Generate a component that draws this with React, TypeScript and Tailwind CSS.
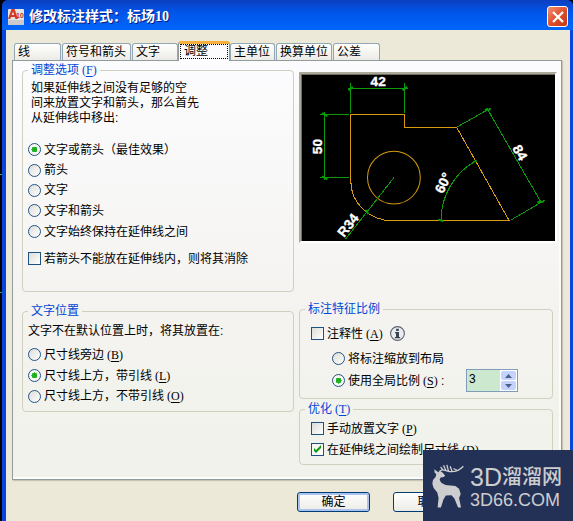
import { ReactNode, useState } from "react";

const TABS = [
  { label: "线", width: "w-[47px]" },
  { label: "符号和箭头", width: "w-[69px]" },
  { label: "文字", width: "w-[46px]" },
  { label: "调整", width: "w-[52px]" },
  { label: "主单位", width: "w-[45px]" },
  { label: "换算单位", width: "w-[56px]" },
  { label: "公差", width: "w-[47px]" },
];

// Mnemonic such as (F), set in the Latin serif face
function Key({ children }: { children: string }) {
  return (
    <span className="pl-[3px] font-['Liberation_Serif',serif]">
      (<u className="underline-offset-2">{children}</u>)
    </span>
  );
}

interface GroupProps {
  title: ReactNode;
  className: string;
  children: ReactNode;
}

function Group({ title, className, children }: GroupProps) {
  return (
    <fieldset className="min-w-0 rounded-[4px] border border-[#d0d0bf]">
      <legend className="ml-[5px] h-[14px] px-[3px] leading-[14px] text-[#0046d5]">
        {title}
      </legend>
      <div className={className}>{children}</div>
    </fieldset>
  );
}

interface OptionProps {
  name: string;
  value: string;
  selected: string;
  onSelect: (value: string) => void;
  height?: string;
  children: ReactNode;
}

function RadioOption({ name, value, selected, onSelect, height = "h-[21px]", children }: OptionProps) {
  return (
    <label className={`flex items-center gap-[3px] whitespace-nowrap ${height}`}>
      <input
        type="radio"
        name={name}
        checked={selected === value}
        onChange={() => onSelect(value)}
        className="h-[13px] w-[13px] shrink-0 appearance-none rounded-full border border-[#21548a] bg-linear-to-br from-[#dcdcd7] to-white checked:bg-[radial-gradient(circle,#1fae1f_0_2px,#55c955_3px,#f6f6f3_3px)]"
      />
      <span>{children}</span>
    </label>
  );
}

function CheckOption({ initial = false, children }: { initial?: boolean; children: ReactNode }) {
  const [checked, setChecked] = useState(initial);
  return (
    <label className="flex h-[21px] items-center gap-[3px] whitespace-nowrap">
      <span className="grid h-[13px] w-[13px] shrink-0">
        <input
          type="checkbox"
          checked={checked}
          onChange={(e) => setChecked(e.target.checked)}
          className="col-start-1 row-start-1 h-[13px] w-[13px] appearance-none border border-[#1c5180] bg-linear-to-br from-[#dcdcd7] to-white checked:from-[#f3f3f0]"
        />
        {checked && (
          <svg viewBox="0 0 13 13" className="pointer-events-none col-start-1 row-start-1 h-[13px] w-[13px]">
            <path d="M3 5v3l2 2 5-5V2L5 7z" fill="#0f9a0f" />
          </svg>
        )}
      </span>
      <span>{children}</span>
    </label>
  );
}

function AppIcon() {
  return (
    <svg viewBox="0 0 16 16" className="h-4 w-4 shrink-0">
      <rect width="16" height="16" rx="1" fill="#e4e4e6" />
      <path d="M0 11h16v4a1 1 0 0 1-1 1H1a1 1 0 0 1-1-1z" fill="#c9c9ce" />
      <path d="M0 10 3.500 0h3L10 10H7.500L6.800 8H3L2.300 10zM3.700 6h2.500L5 2.500z" fill="#d5371f" />
      <text x="8" y="9" fontSize="7" fontWeight="700" fontFamily="Liberation Sans" fill="#c8301c">
        10
      </text>
    </svg>
  );
}

function InfoIcon() {
  return (
    <svg viewBox="0 0 15 15" className="h-[15px] w-[15px]">
      <circle cx="7.500" cy="7.500" r="6.900" fill="#e9ebee" stroke="#5a636c" strokeWidth="1.100" />
      <path d="M6.200 2.800h2.600v2.200H6.200zM5 6h4v5h1.200v1.200H4.800V11H6V7.200H5z" fill="#3a4450" />
    </svg>
  );
}

function Preview() {
  return (
    <div className="border-2 border-t-[#aca899] border-r-white border-b-white border-l-[#aca899]">
      <div className="border-t border-l border-[#716f64] bg-black">
        <svg viewBox="20 27 757 496" className="block h-auto w-full">
          <g fill="none" stroke="#d89a10" strokeWidth="3">
            <path
              d="M166 145H328V184H483L640 463H291A125 118 0 0 1 166 345Z"
              shapeRendering="crispEdges"
            />
            <circle cx="295" cy="334" r="79" />
          </g>
          <g fill="none" stroke="#0a9a0a" strokeWidth="3" shapeRendering="crispEdges">
            <path d="M166 51V141M328 51V141M158 68H336" />
            <path d="M73 145H161M73 334H161M88 139V340" />
            <path d="M485 182 586 125M645 461 746 402M573 126 737 411" />
            <path d="M151 517 295 334" />
            <path d="M436 463A204 204 0 0 1 538 285" />
          </g>
          <g stroke="#0a9a0a" strokeWidth="6">
            <path d="M159 73 172 63M321 73 335 62M80 141 96 150M80 330 96 339" />
            <path d="M567 132 584 130M724 408 742 406M211 431 219 443M533 287 543 283M428 459 443 465" />
          </g>
          <g
            fill="#fff"
            stroke="#fff"
            fontFamily="Liberation Sans, sans-serif"
            fontSize="41"
            fontWeight="700"
            textAnchor="middle"
          >
            <text x="248" y="59">42</text>
            <text transform="translate(80 241) rotate(-90)">50</text>
            <text transform="translate(660 266) rotate(60)">84</text>
            <text transform="translate(455 356) rotate(-65)">60°</text>
            <text transform="translate(169 485) rotate(-52)">R34</text>
          </g>
        </svg>
      </div>
    </div>
  );
}

function ScaleSpinner() {
  const [scale, setScale] = useState(3);
  return (
    <div className="flex h-[23px] w-[52px] border border-[#7f9db9] bg-[#cce8cf]">
      <input
        type="text"
        aria-label="全局比例"
        value={scale}
        onChange={(e) => setScale(Number(e.target.value) || 0)}
        className="h-[17px] w-full min-w-0 bg-transparent pl-[2px] font-['Liberation_Sans',sans-serif] outline-none"
      />
      <div className="flex w-[17px] shrink-0 flex-col gap-px bg-white p-px">
        <button
          type="button"
          aria-label="增大"
          onClick={() => setScale(scale + 1)}
          className="flex flex-1 items-center justify-center rounded-[2px] bg-[#c3d3fd]"
        >
          <svg viewBox="0 0 7 4" className="h-1 w-[7px]">
            <path d="M0 4 3.500 0 7 4z" fill="#4d6185" />
          </svg>
        </button>
        <button
          type="button"
          aria-label="减小"
          onClick={() => setScale(scale - 1)}
          className="flex flex-1 items-center justify-center rounded-[2px] bg-[#c3d3fd]"
        >
          <svg viewBox="0 0 7 4" className="h-1 w-[7px]">
            <path d="M0 0h7L3.500 4z" fill="#4d6185" />
          </svg>
        </button>
      </div>
    </div>
  );
}

function Watermark() {
  return (
    <div className="fixed right-0 bottom-0 flex h-[71px] w-[150px] items-center gap-[6px] bg-[#243156] pl-[9px] text-[#cdcdcf]">
      <svg viewBox="11 12 97 132" className="h-11 w-8 shrink-0" fill="currentColor">
        <path d="M18 27 30 36 38 33 45 39 51 47 47 51 37 52 34 59 39 68 52 75 82 78 93 86 98 102 93 114 99 143H90L79 116 70 106 53 107 46 118 38 143H28L31 114 27 98 16 84 12 71 14 60 22 51 24 42 19 38Z" />
        <path
          d="M33 36C36 29 44 28 50 31L64 34C80 36 94 31 106 18M44 29 37 20M53 31 46 15M61 33 56 14M72 34 66 18M88 31 76 25"
          fill="none"
          stroke="currentColor"
          strokeWidth="4"
        />
      </svg>
      <div className="whitespace-nowrap">
        <div className="flex items-center leading-6">
          <span className="text-[25px]">3D</span>
          <span className="text-xl font-medium">溜溜网</span>
        </div>
        <div className="text-lg leading-[18px]">3D66.COM</div>
      </div>
    </div>
  );
}

export default function App() {
  const [tab, setTab] = useState("调整");
  const [fit, setFit] = useState("best");
  const [placement, setPlacement] = useState("leader");
  const [scaleMode, setScaleMode] = useState("global");

  return (
    <div className="flex min-h-screen bg-black font-['Liberation_Sans','Noto_Sans_CJK_SC',sans-serif] text-xs text-black">
      <div className="w-[2px] shrink-0 bg-black">
        <div className="mt-[174px] h-px bg-[#2fb52f]" />
        <div className="mt-[117px] h-px bg-[#2fb52f]" />
      </div>
      <main className="flex min-w-0 flex-1 flex-col rounded-t-[6px] bg-[#0a46dc]">
        <header className="flex h-[30px] shrink-0 items-center gap-[5px] rounded-t-[6px] bg-linear-to-b from-[#0a3fc0] via-[#0055e8] via-40% to-[#0066fc] pt-[3px] pr-[5px] pl-[6px]">
          <AppIcon />
          <h1 className="flex-1 font-['Liberation_Serif','Noto_Sans_CJK_SC',serif] text-sm font-bold whitespace-nowrap text-white [text-shadow:1px_1px_#0a1883]">
            修改标注样式：标场10
          </h1>
          <button
            type="button"
            aria-label="关闭"
            className="flex h-[21px] w-[21px] items-center justify-center rounded-[3px] border border-white bg-linear-to-br from-[#ee9174] via-[#e0502c] to-[#c33a12]"
          >
            <svg viewBox="0 0 12 12" className="h-3 w-3">
              <path d="M1 1l10 10M11 1 1 11" stroke="#fff" strokeWidth="2.200" />
            </svg>
          </button>
        </header>

        <div className="flex-1 border-r-[3px] border-l-4 border-r-[#0a46dc] border-l-[#0a46dc] bg-[#ece9d8] pt-[11px] pr-2 pb-[9px] pl-[6px]">
          {/* Tabs */}
          <div role="tablist" className="flex h-[19px] items-end gap-px pl-[2px]">
            {TABS.map(({ label, width }) =>
              label === tab ? (
                <button
                  key={label}
                  type="button"
                  role="tab"
                  aria-selected
                  className={`-mx-px -mb-px flex h-5 shrink-0 rounded-t-[3px] border-t-[3px] border-r border-l border-t-[#f9b03a] border-r-[#919b9c] border-l-[#919b9c] bg-[#fcfcfe] px-px pb-[2px] ${width}`}
                >
                  <span className="h-full flex-1 border border-dotted border-black pl-[3px] text-left leading-[13px]">
                    {label}
                  </span>
                </button>
              ) : (
                <button
                  key={label}
                  type="button"
                  role="tab"
                  aria-selected={false}
                  onClick={() => setTab(label)}
                  className={`h-[17px] shrink-0 rounded-t-[3px] border border-b-0 border-[#91a7b4] bg-linear-to-b from-white to-[#ecebe6] pl-[3px] text-left leading-4 whitespace-nowrap ${width}`}
                >
                  {label}
                </button>
              )
            )}
          </div>

          <section className="grid grid-cols-[272fr_254fr] gap-[5px] border border-[#919b9c] bg-linear-to-b from-[#fcfcfe] via-[#f4f3f0] via-60% to-[#f1f2eb] pt-[2px] pr-2 pb-[14px] pl-[9px] shadow-[1px_1px_1px_#c8c5b4,inset_-2px_-2px_#fcfcfb]">
            <div className="flex flex-col gap-3 pb-[53px]">
              <Group title={<>调整选项<Key>F</Key></>} className="px-[5px] pb-[22px]">
                <p className="pt-[4px] pl-[3px] leading-[15px]">
                  如果延伸线之间没有足够的空
                  <br />
                  间来放置文字和箭头，那么首先
                  <br />
                  从延伸线中移出:
                </p>
                <div className="pt-[13px]">
                  <RadioOption name="fit" value="best" selected={fit} onSelect={setFit}>
                    文字或箭头（最佳效果）
                  </RadioOption>
                  <RadioOption name="fit" value="arrows" selected={fit} onSelect={setFit} height="h-5">
                    箭头
                  </RadioOption>
                  <RadioOption name="fit" value="text" selected={fit} onSelect={setFit} height="h-5">
                    文字
                  </RadioOption>
                  <RadioOption name="fit" value="both" selected={fit} onSelect={setFit}>
                    文字和箭头
                  </RadioOption>
                  <RadioOption name="fit" value="keep" selected={fit} onSelect={setFit}>
                    文字始终保持在延伸线之间
                  </RadioOption>
                </div>
                <div className="pt-[6px]">
                  <CheckOption>若箭头不能放在延伸线内，则将其消除</CheckOption>
                </div>
              </Group>

              <Group title="文字位置" className="px-[5px] pb-[5px]">
                <p className="pt-[5px] pb-[4px] leading-[17px]">文字不在默认位置上时，将其放置在:</p>
                <RadioOption name="placement" value="beside" selected={placement} onSelect={setPlacement}>
                  尺寸线旁边<Key>B</Key>
                </RadioOption>
                <RadioOption name="placement" value="leader" selected={placement} onSelect={setPlacement}>
                  尺寸线上方，带引线<Key>L</Key>
                </RadioOption>
                <RadioOption name="placement" value="noLeader" selected={placement} onSelect={setPlacement} height="h-5">
                  尺寸线上方，不带引线<Key>O</Key>
                </RadioOption>
              </Group>
            </div>

            <div className="flex flex-col justify-between">
              <div className="-mr-[4px] pt-[9px]">
                <Preview />
              </div>

              <div className="flex flex-col gap-[3px]">
                <Group title="标注特征比例" className="px-[11px] pb-[6px]">
                  <div className="flex items-center gap-[7px] pt-[7px] pb-[4px]">
                    <CheckOption>
                      注释性<Key>A</Key>
                    </CheckOption>
                    <InfoIcon />
                  </div>
                  <div className="pl-[21px]">
                    <RadioOption name="scale" value="layout" selected={scaleMode} onSelect={setScaleMode}>
                      将标注缩放到布局
                    </RadioOption>
                    <div className="flex items-center justify-between pr-[23px]">
                      <RadioOption name="scale" value="global" selected={scaleMode} onSelect={setScaleMode}>
                        使用全局比例<Key>S</Key> :
                      </RadioOption>
                      <ScaleSpinner />
                    </div>
                  </div>
                </Group>

                <Group title={<>优化<Key>T</Key></>} className="px-[11px] pb-[4px]">
                  <div className="pt-[2px]">
                    <CheckOption>
                      手动放置文字<Key>P</Key>
                    </CheckOption>
                    <CheckOption initial>
                      在延伸线之间绘制尺寸线<Key>D</Key>
                    </CheckOption>
                  </div>
                </Group>
              </div>
            </div>
          </section>

          <footer className="flex justify-end gap-[23px] pt-3 pr-24">
            <button
              type="button"
              className="h-5 w-[73px] rounded-[3px] border border-[#003c74] bg-linear-to-b from-white to-[#ecebe6] leading-[17px] shadow-[inset_0_0_0_2px_#a9c4f0]"
            >
              确定
            </button>
            <button
              type="button"
              className="h-5 w-[73px] rounded-[3px] border border-[#003c74] bg-linear-to-b from-white to-[#ecebe6] leading-[17px]"
            >
              取消
            </button>
          </footer>
        </div>
      </main>
      <Watermark />
    </div>
  );
}
